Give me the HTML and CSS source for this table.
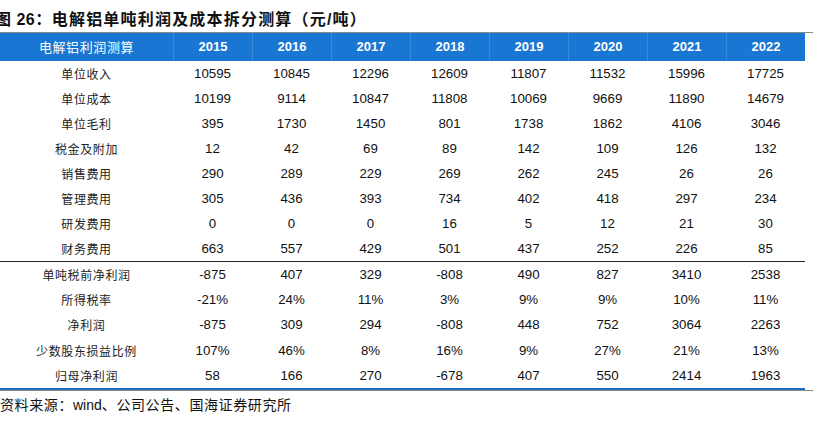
FILE: index.html
```html
<!DOCTYPE html>
<html lang="zh">
<head>
<meta charset="utf-8">
<link rel="stylesheet" href="styles.css">
</head>
<body>
<div class="title"><span class="lat">图 26：</span>电解铝单吨利润及成本拆分测算（元/吨）</div>
<div class="frame">
  <div class="table">
    <div class="row head">
      <div class="c name">电解铝利润测算</div>
      <div class="c">2015</div><div class="c">2016</div><div class="c">2017</div><div class="c">2018</div>
      <div class="c">2019</div><div class="c">2020</div><div class="c">2021</div><div class="c">2022</div>
    </div>
    <div class="group upper">
      <div class="row"><div class="c name">单位收入</div><div class="c">10595</div><div class="c">10845</div><div class="c">12296</div><div class="c">12609</div><div class="c">11807</div><div class="c">11532</div><div class="c">15996</div><div class="c">17725</div></div>
      <div class="row"><div class="c name">单位成本</div><div class="c">10199</div><div class="c">9114</div><div class="c">10847</div><div class="c">11808</div><div class="c">10069</div><div class="c">9669</div><div class="c">11890</div><div class="c">14679</div></div>
      <div class="row"><div class="c name">单位毛利</div><div class="c">395</div><div class="c">1730</div><div class="c">1450</div><div class="c">801</div><div class="c">1738</div><div class="c">1862</div><div class="c">4106</div><div class="c">3046</div></div>
      <div class="row"><div class="c name">税金及附加</div><div class="c">12</div><div class="c">42</div><div class="c">69</div><div class="c">89</div><div class="c">142</div><div class="c">109</div><div class="c">126</div><div class="c">132</div></div>
      <div class="row"><div class="c name">销售费用</div><div class="c">290</div><div class="c">289</div><div class="c">229</div><div class="c">269</div><div class="c">262</div><div class="c">245</div><div class="c">26</div><div class="c">26</div></div>
      <div class="row"><div class="c name">管理费用</div><div class="c">305</div><div class="c">436</div><div class="c">393</div><div class="c">734</div><div class="c">402</div><div class="c">418</div><div class="c">297</div><div class="c">234</div></div>
      <div class="row"><div class="c name">研发费用</div><div class="c">0</div><div class="c">0</div><div class="c">0</div><div class="c">16</div><div class="c">5</div><div class="c">12</div><div class="c">21</div><div class="c">30</div></div>
      <div class="row"><div class="c name">财务费用</div><div class="c">663</div><div class="c">557</div><div class="c">429</div><div class="c">501</div><div class="c">437</div><div class="c">252</div><div class="c">226</div><div class="c">85</div></div>
    </div>
    <div class="group lower">
      <div class="row"><div class="c name">单吨税前净利润</div><div class="c">-875</div><div class="c">407</div><div class="c">329</div><div class="c">-808</div><div class="c">490</div><div class="c">827</div><div class="c">3410</div><div class="c">2538</div></div>
      <div class="row"><div class="c name">所得税率</div><div class="c">-21%</div><div class="c">24%</div><div class="c">11%</div><div class="c">3%</div><div class="c">9%</div><div class="c">9%</div><div class="c">10%</div><div class="c">11%</div></div>
      <div class="row"><div class="c name">净利润</div><div class="c">-875</div><div class="c">309</div><div class="c">294</div><div class="c">-808</div><div class="c">448</div><div class="c">752</div><div class="c">3064</div><div class="c">2263</div></div>
      <div class="row"><div class="c name">少数股东损益比例</div><div class="c">107%</div><div class="c">46%</div><div class="c">8%</div><div class="c">16%</div><div class="c">9%</div><div class="c">27%</div><div class="c">21%</div><div class="c">13%</div></div>
      <div class="row"><div class="c name">归母净利润</div><div class="c">58</div><div class="c">166</div><div class="c">270</div><div class="c">-678</div><div class="c">407</div><div class="c">550</div><div class="c">2414</div><div class="c">1963</div></div>
    </div>
  </div>
</div>
<div class="source">资料来源：<span class="lat">wind</span>、公司公告、国海证券研究所</div>
</body>
</html>
```
FILE: styles.css
```css
html, body {
  margin: 0;
  padding: 0;
  background: #fff;
}
body {
  width: 822px;
  height: 424px;
  overflow: hidden;
  font-family: "Liberation Sans", "Noto Sans CJK SC", sans-serif;
  color: #111;
}
.title {
  height: 32px;
  box-sizing: border-box;
  padding-top: 8px;
  line-height: 24px;
  margin-left: -5px;
  font-size: 16px;
  font-weight: bold;
  letter-spacing: 1.2px;
  font-family: "Liberation Sans", "Noto Sans CJK SC", sans-serif;
  white-space: nowrap;
}
.title .lat {
  letter-spacing: 0.5px;
}
.frame {
  width: 813px;
  border-top: 1px solid #8a8a8a;
  border-bottom: 1px solid #8a8a8a;
}
.table {
  width: 805px;
}
.row {
  display: grid;
  grid-template-columns: 173px repeat(8, 79px);
  height: 25px;
  align-items: center;
}
.c {
  text-align: center;
  font-size: 13.3px;
  line-height: 25px;
  height: 100%;
}
.c.name {
  font-family: "Noto Sans CJK SC", sans-serif;
  font-size: 12px;
  letter-spacing: 0.6px;
  color: #222;
}
.head {
  height: 28px;
  background: #1976d2;
  color: #fff;
}
.head .c {
  line-height: 28px;
  font-weight: bold;
  font-size: 13px;
  color: #fff;
  border-left: 1px solid rgba(255, 255, 255, 0.14);
  box-sizing: border-box;
}
.head .c.name {
  font-weight: normal;
  border-left: none;
  color: #fff;
}
.upper {
  border-bottom: 1px solid #222;
}
.lower {
  border-bottom: 2px solid #1a6cc4;
}
.lower .row {
  height: 25.2px;
}
.lower .c {
  line-height: 25.2px;
}
.source {
  line-height: 26px;
  font-size: 14px;
  letter-spacing: 0.6px;
  font-family: "Noto Sans CJK SC", sans-serif;
  white-space: nowrap;
}
.source .lat {
  font-family: "Liberation Sans", sans-serif;
  letter-spacing: 0;
}
```
